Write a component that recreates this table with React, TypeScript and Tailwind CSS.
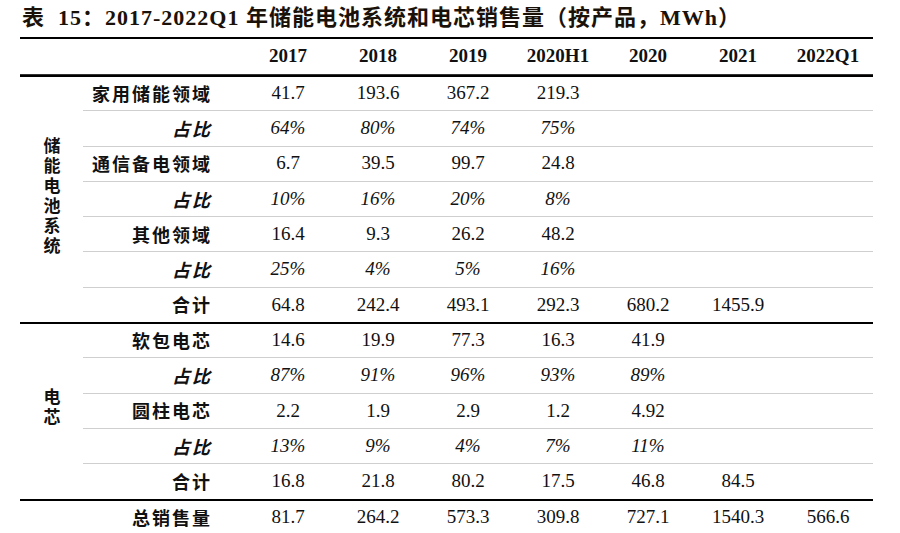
const years = ["2017", "2018", "2019", "2020H1", "2020", "2021", "2022Q1"];

type Row = { label: string; values: string[]; pct?: boolean };

const groups: { name: string; rows: Row[] }[] = [
  {
    name: "储能电池系统",
    rows: [
      { label: "家用储能领域", values: ["41.7", "193.6", "367.2", "219.3"] },
      { label: "占比", values: ["64%", "80%", "74%", "75%"], pct: true },
      { label: "通信备电领域", values: ["6.7", "39.5", "99.7", "24.8"] },
      { label: "占比", values: ["10%", "16%", "20%", "8%"], pct: true },
      { label: "其他领域", values: ["16.4", "9.3", "26.2", "48.2"] },
      { label: "占比", values: ["25%", "4%", "5%", "16%"], pct: true },
      { label: "合计", values: ["64.8", "242.4", "493.1", "292.3", "680.2", "1455.9"] },
    ],
  },
  {
    name: "电芯",
    rows: [
      { label: "软包电芯", values: ["14.6", "19.9", "77.3", "16.3", "41.9"] },
      { label: "占比", values: ["87%", "91%", "96%", "93%", "89%"], pct: true },
      { label: "圆柱电芯", values: ["2.2", "1.9", "2.9", "1.2", "4.92"] },
      { label: "占比", values: ["13%", "9%", "4%", "7%", "11%"], pct: true },
      { label: "合计", values: ["16.8", "21.8", "80.2", "17.5", "46.8", "84.5"] },
    ],
  },
];

const total = ["81.7", "264.2", "573.3", "309.8", "727.1", "1540.3", "566.6"];

const serif = "font-['Liberation_Serif','Noto_Sans_CJK_SC',serif]";
const cjk = "font-['Noto_Sans_CJK_SC',sans-serif]";

export default function App() {
  return (
    <div className="w-[900px] h-[533px] bg-white overflow-hidden text-[#111]">
      <h1 className={`${serif} pl-[22px] pt-[3px] h-[37px] text-[22px] leading-[30px] font-bold tracking-[1px] text-[#1a1208]`}>
        表&nbsp; 15：2017-2022Q1 年储能电池系统和电芯销售量（按产品，MWh）
      </h1>
      <table className="ml-[20px] w-[853px] border-separate border-spacing-0 table-fixed">
        <colgroup>
          <col className="w-[63px]" />
          <col className="w-[160px]" />
          {years.map((y) => (
            <col key={y} className="w-[90px]" />
          ))}
        </colgroup>
        <thead>
          <tr>
            <th className="h-[38px] border-t-2 border-b border-t-black border-b-[#333]" />
            <th className="border-t-2 border-b border-t-black border-b-[#333]" />
            {years.map((y) => (
              <th
                key={y}
                className={`${serif} border-t-2 border-b border-t-black border-b-[#333] text-[19px] font-bold text-center`}
              >
                {y}
              </th>
            ))}
          </tr>
        </thead>
        <tbody>
          {groups.map((g) =>
            g.rows.map((r, i) => {
              const first = i === 0;
              const line = first ? "border-t-2 border-t-black" : "border-t border-t-[#cfcfcf]";
              return (
                <tr key={g.name + i}>
                  {first && (
                    <td rowSpan={g.rows.length} className="border-t-2 border-t-black text-center align-middle">
                      <span
                        className={`${cjk} inline-block [writing-mode:vertical-rl] text-[17px] leading-[20px] tracking-[3px] font-bold`}
                      >
                        {g.name}
                      </span>
                    </td>
                  )}
                  <td
                    className={`${cjk} ${line} h-[35.3px] pr-[31px] text-right text-[18px] font-bold tracking-[2px] ${r.pct ? "italic" : ""}`}
                  >
                    {r.label}
                  </td>
                  {years.map((y, k) => (
                    <td
                      key={y}
                      className={`${serif} ${line} text-center text-[19px] ${r.pct ? "italic" : ""}`}
                    >
                      {r.values[k] ?? ""}
                    </td>
                  ))}
                </tr>
              );
            })
          )}
          <tr>
            <td className="border-t-2 border-t-black h-[36px]" />
            <td className={`${cjk} border-t-2 border-t-black pr-[31px] text-right text-[18px] font-bold tracking-[2px]`}>
              总销售量
            </td>
            {total.map((v, k) => (
              <td key={k} className={`${serif} border-t-2 border-t-black text-center text-[19px]`}>
                {v}
              </td>
            ))}
          </tr>
        </tbody>
      </table>
    </div>
  );
}
